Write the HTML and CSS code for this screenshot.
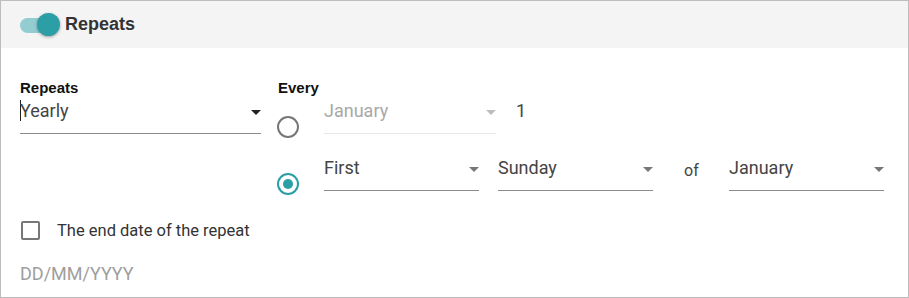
FILE: index.html
```html
<!DOCTYPE html>
<html lang="en">
<head>
    <meta charset="UTF-8">
    <meta name="viewport" content="width=device-width, initial-scale=1.0">
    <title>Repeats</title>
    <link rel="stylesheet" href="styles.css">
</head>
<body>
    <div class="panel">
        <div class="panel-header">
            <span class="toggle"><span class="toggle-track"></span><span class="toggle-thumb"></span></span>
            <span class="panel-title">Repeats</span>
        </div>
        <div class="panel-body">
            <div class="columns">
                <div class="col-left">
                    <div class="label">Repeats</div>
                    <div class="field field-wide">
                        <span class="field-text"><span class="caret"></span>Yearly</span>
                        <span class="arrow"></span>
                    </div>
                </div>
                <div class="col-right">
                    <div class="label">Every</div>
                    <div class="row">
                        <span class="radio"></span>
                        <div class="field field-month disabled">
                            <span class="field-text">January</span>
                            <span class="arrow"></span>
                        </div>
                        <span class="day-num">1</span>
                    </div>
                    <div class="row row-second">
                        <span class="radio checked"></span>
                        <div class="field">
                            <span class="field-text">First</span>
                            <span class="arrow"></span>
                        </div>
                        <div class="field field-gap">
                            <span class="field-text">Sunday</span>
                            <span class="arrow"></span>
                        </div>
                        <span class="of">of</span>
                        <div class="field">
                            <span class="field-text">January</span>
                            <span class="arrow"></span>
                        </div>
                    </div>
                </div>
            </div>
            <div class="check-row">
                <span class="checkbox"></span>
                <span class="check-label">The end date of the repeat</span>
            </div>
            <div class="date-input">DD/MM/YYYY</div>
        </div>
    </div>
</body>
</html>
```

FILE: styles.css
```css
body {
    margin: 0;
    padding: 0;
    font-family: Roboto, "Liberation Sans", Arial, sans-serif;
    background-color: #fff;
}
.panel {
    width: 909px;
    height: 298px;
    box-sizing: border-box;
    border: 1px solid #bdbdbd;
    overflow: hidden;
}
.panel-header {
    height: 47px;
    background-color: #f4f4f4;
    display: flex;
    align-items: center;
    padding-left: 19px;
}
.toggle {
    position: relative;
    width: 40px;
    height: 24px;
    margin-right: 5px;
}
.toggle-track {
    position: absolute;
    left: 0;
    top: 5px;
    width: 36px;
    height: 15px;
    border-radius: 8px;
    background-color: #93cdd1;
}
.toggle-thumb {
    position: absolute;
    right: 0;
    top: 0;
    width: 23px;
    height: 23px;
    border-radius: 50%;
    background-color: #2c9ea6;
    box-shadow: 0 1px 3px rgba(0,0,0,0.35);
}
.panel-title {
    font-family: "Liberation Sans", Arial, sans-serif;
    font-weight: bold;
    font-size: 18px;
    color: #333;
}
.panel-body {
    padding: 32px 19px 0 19px;
}
.columns {
    display: flex;
    gap: 17px;
}
.col-left {
    width: 241px;
}
.label {
    font-family: "Liberation Sans", Arial, sans-serif;
    font-weight: bold;
    font-size: 15px;
    line-height: 16px;
    color: #111;
    margin-bottom: 1px;
}
.field {
    position: relative;
    width: 155px;
    height: 37px;
    box-sizing: border-box;
    border-bottom: 1px solid #8c8c8c;
    padding-top: 1px;
}
.field-wide {
    width: 241px;
}
.field-month {
    width: 172px;
}
.field-gap {
    margin-left: 19px;
}
.field-text {
    display: block;
    font-size: 18px;
    line-height: 26px;
    color: #444;
}
.caret {
    display: inline-block;
    width: 1px;
    height: 21px;
    background-color: #222;
    vertical-align: -4px;
    margin-right: -1px;
}
.arrow {
    position: absolute;
    right: 0;
    top: 13px;
    width: 0;
    height: 0;
    border-left: 5px solid transparent;
    border-right: 5px solid transparent;
    border-top: 5px solid #222;
}
.row .arrow {
    border-top-color: #777;
}
.disabled {
    border-bottom-color: #e8e8e8;
}
.disabled .field-text {
    color: #a8a8a8;
}
.row .disabled .arrow {
    border-top-color: #bdbdbd;
}
.row {
    display: flex;
    align-items: flex-start;
}
.row-second {
    margin-top: 16px;
}
.radio {
    width: 22px;
    height: 22px;
    box-sizing: border-box;
    border: 2px solid #777;
    border-radius: 50%;
    margin-top: 19px;
    margin-left: -1px;
    margin-right: 25px;
    position: relative;
}
.radio.checked {
    border-color: #2c9ea6;
}
.radio.checked::after {
    content: "";
    position: absolute;
    left: 4px;
    top: 4px;
    width: 10px;
    height: 10px;
    border-radius: 50%;
    background-color: #2c9ea6;
}
.day-num {
    margin-left: 20px;
    padding-top: 1px;
    font-size: 18px;
    line-height: 26px;
    color: #444;
}
.of {
    width: 76px;
    padding-left: 31px;
    box-sizing: border-box;
    padding-top: 5px;
    font-size: 16px;
    line-height: 24px;
    color: #444;
}
.check-row {
    display: flex;
    align-items: center;
    margin-top: 26px;
    height: 19px;
}
.checkbox {
    width: 19px;
    height: 19px;
    box-sizing: border-box;
    border: 2px solid #777;
    border-radius: 2px;
    margin-left: 1px;
    margin-right: 17px;
}
.check-label {
    font-size: 16.5px;
    color: #333;
}
.date-input {
    margin-top: 22px;
    font-size: 18px;
    line-height: 24px;
    color: #9e9e9e;
}
```
